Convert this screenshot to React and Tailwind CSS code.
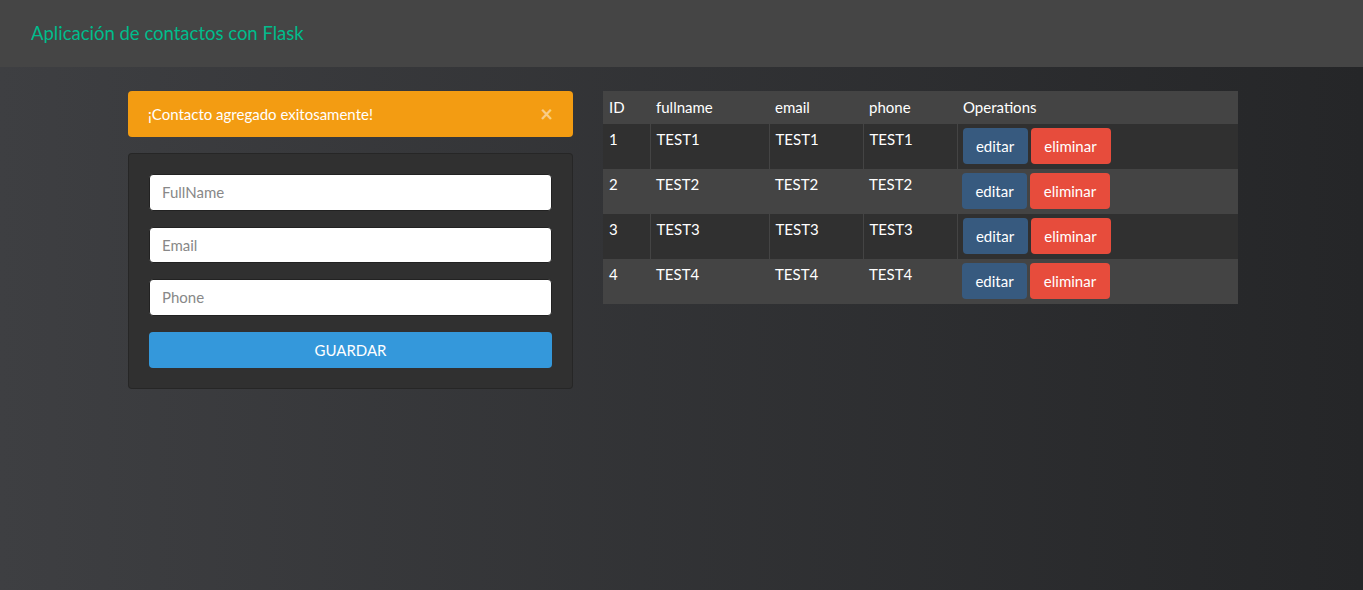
export default function App() {
  const rows = [1, 2, 3, 4];
  return (
    <div className="min-h-[590px] w-full bg-gradient-to-r from-[#3e3f42] to-[#252628] font-['Lato',sans-serif] text-[15px] leading-[1.5] text-white">
      <nav className="flex h-[67px] items-center bg-[#454545] pl-[31px]">
        <span className="text-[18.5px] text-[#00bc8c]">Aplicación de contactos con Flask</span>
      </nav>
      <div className="ml-[128px] mt-[24px] flex gap-[30px]">
        <div className="w-[445px]">
          <div className="flex h-[46px] items-center justify-between rounded-[4px] bg-[#f39c12] pl-[20px] pr-[20px]">
            <span>¡Contacto agregado exitosamente!</span>
            <span className="text-[22px] font-bold leading-none text-white/50">×</span>
          </div>
          <div className="mt-[16px] rounded-[4px] border border-black/20 bg-[#303030] p-[20px]">
            <div className="flex flex-col gap-[16px]">
              <input
                placeholder="FullName"
                className="h-[36.5px] w-full rounded-[4px] border border-[#222] bg-white px-[12px] text-[#444] placeholder:text-[#888]"
              />
              <input
                placeholder="Email"
                className="h-[36.5px] w-full rounded-[4px] border border-[#222] bg-white px-[12px] text-[#444] placeholder:text-[#888]"
              />
              <input
                placeholder="Phone"
                className="h-[36.5px] w-full rounded-[4px] border border-[#222] bg-white px-[12px] text-[#444] placeholder:text-[#888]"
              />
              <button className="h-[36.5px] w-full rounded-[4px] bg-[#3498db] text-white">GUARDAR</button>
            </div>
          </div>
        </div>
        <div className="w-[635px]">
          <table className="w-full border-collapse">
            <thead>
              <tr className="bg-[#444]">
                <th className="h-[33px] w-[47px] px-[6px] text-left align-middle font-normal">ID</th>
                <th className="w-[119px] px-[6px] text-left align-middle font-normal">fullname</th>
                <th className="w-[94px] px-[6px] text-left align-middle font-normal">email</th>
                <th className="w-[94px] px-[6px] text-left align-middle font-normal">phone</th>
                <th className="px-[6px] text-left align-middle font-normal">Operations</th>
              </tr>
            </thead>
            <tbody>
              {rows.map((n) => {
                const dark = n % 2 === 1;
                const cell = dark
                  ? "border-x border-[#444] px-[6px] pt-[4px] align-top"
                  : "px-[6px] pt-[4px] align-top";
                return (
                  <tr key={n} className={dark ? "h-[45px] bg-[#303030]" : "h-[45px] bg-[#444]"}>
                    <td className={cell + " border-l-0"}>{n}</td>
                    <td className={cell}>{"TEST" + n}</td>
                    <td className={cell}>{"TEST" + n}</td>
                    <td className={cell}>{"TEST" + n}</td>
                    <td className={cell + " border-r-0 !pl-[5px]"}>
                      <div className="flex gap-[3px]">
                        <button className="h-[36px] w-[65px] rounded-[4px] bg-[#375a7f] text-white">editar</button>
                        <button className="h-[36px] w-[80px] rounded-[4px] bg-[#e74c3c] text-white">eliminar</button>
                      </div>
                    </td>
                  </tr>
                );
              })}
            </tbody>
          </table>
        </div>
      </div>
    </div>
  );
}
